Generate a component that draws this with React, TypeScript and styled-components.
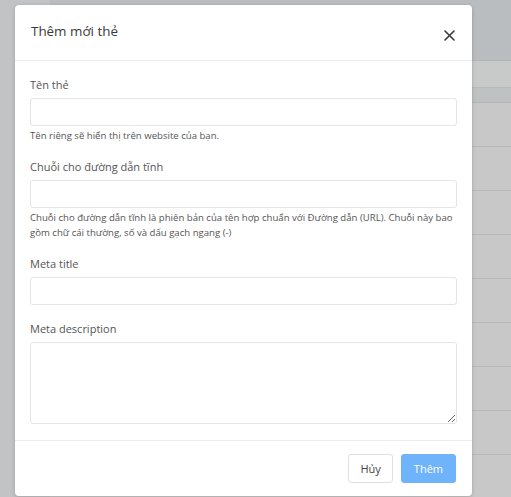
import React from 'react';
import styled, { createGlobalStyle } from 'styled-components';

const GlobalStyle = createGlobalStyle`
  html, body {
    margin: 0;
    padding: 0;
    width: 511px;
    height: 497px;
    overflow: hidden;
    background: #c1c3c4;
    font-family: 'Open Sans', 'Liberation Sans', Arial, sans-serif;
  }
  * { box-sizing: border-box; }
`;

const fields = [
  { label: 'Tên thẻ', help: 'Tên riêng sẽ hiển thị trên website của bạn.' },
  {
    label: 'Chuỗi cho đường dẫn tĩnh',
    help: 'Chuỗi cho đường dẫn tĩnh là phiên bản của tên hợp chuẩn với Đường dẫn (URL). Chuỗi này bao gồm chữ cái thường, số và dấu gạch ngang (-)'
  },
  { label: 'Meta title' }
];

const App = () => {
  return (
    <Screen>
      <GlobalStyle />
      <Backdrop>
        <Sidebar />
        <Main>
          <TopBar />
          <TableHead />
          <TableHeadStrip />
          {Array.from({ length: 9 }).map((_, i) => (
            <TableRow key={i} />
          ))}
        </Main>
      </Backdrop>

      <Modal>
        <ModalHeader>
          <ModalTitle>Thêm mới thẻ</ModalTitle>
          <CloseButton aria-label="close">
            <svg width="11" height="11" viewBox="0 0 11 11">
              <path d="M1 1L10 10M10 1L1 10" stroke="#3a3a3a" strokeWidth="1.6" strokeLinecap="round" />
            </svg>
          </CloseButton>
        </ModalHeader>

        <ModalBody>
          {fields.map((f) => (
            <Field key={f.label}>
              <Label>{f.label}</Label>
              <Input type="text" />
              {f.help && <Help>{f.help}</Help>}
            </Field>
          ))}
          <Field>
            <Label>Meta description</Label>
            <TextArea />
          </Field>
        </ModalBody>

        <ModalFooter>
          <Button>Hủy</Button>
          <Button $primary>Thêm</Button>
        </ModalFooter>
      </Modal>
    </Screen>
  );
};

export default App;

const Screen = styled.div`
  position: relative;
  width: 511px;
  height: 497px;
  overflow: hidden;
`;

const Backdrop = styled.div`
  display: grid;
  grid-template-columns: 50px 1fr;
  height: 100%;
`;

const Sidebar = styled.div`
  background: #c1c3c4;
`;

const Main = styled.div`
  display: flex;
  flex-direction: column;
  background: #c8c8c8;
`;

const TopBar = styled.div`
  height: 61px;
  background: #b9bdbf;
  border-bottom: 1px solid #b3b6b8;
`;

const TableHead = styled.div`
  height: 27px;
  background: #c8c9c9;
  border-bottom: 1px solid #b6b8b9;
`;

const TableHeadStrip = styled.div`
  height: 15px;
  background: #bfc2c3;
  border-bottom: 1px solid #b4b6b7;
`;

const TableRow = styled.div`
  height: 44px;
  flex-shrink: 0;
  border-bottom: 1px solid #b7b7b7;
`;

const Modal = styled.div`
  position: absolute;
  left: 15px;
  top: 5px;
  width: 457px;
  height: 491px;
  background: #fff;
  border-radius: 4px;
  box-shadow: 0 1px 4px rgba(0, 0, 0, 0.18);
  display: flex;
  flex-direction: column;
`;

const ModalHeader = styled.div`
  height: 56px;
  display: flex;
  align-items: center;
  justify-content: space-between;
  padding: 0 17px 0 16px;
  border-bottom: 1px solid #ececec;
`;

const ModalTitle = styled.h4`
  margin: 0 0 3px;
  font-size: 13.4px;
  font-weight: 400;
  color: #3a3a3a;
`;

const CloseButton = styled.button`
  border: none;
  background: none;
  padding: 0;
  margin-top: 5px;
  display: flex;
  cursor: pointer;
`;

const ModalBody = styled.div`
  flex: 1;
  padding: 16px 15px 16px;
  display: flex;
  flex-direction: column;
  gap: 16px;
  border-bottom: 1px solid #ececec;
`;

const Field = styled.div`
  display: flex;
  flex-direction: column;
`;

const Label = styled.label`
  font-size: 11px;
  line-height: 16px;
  color: #555;
  margin-bottom: 5px;
`;

const Input = styled.input`
  height: 28px;
  width: 100%;
  border: 1px solid #e4e4e4;
  border-radius: 3px;
  outline: none;
  font: inherit;
`;

const TextArea = styled.textarea`
  height: 82px;
  width: 100%;
  border: 1px solid #e4e4e4;
  border-radius: 3px;
  outline: none;
  font: inherit;
  resize: vertical;
`;

const Help = styled.div`
  margin-top: 2px;
  font-size: 9.6px;
  line-height: 15px;
  color: #555;
`;

const ModalFooter = styled.div`
  height: 55px;
  display: flex;
  align-items: center;
  justify-content: flex-end;
  gap: 8px;
  padding: 0 16px;
`;

const Button = styled.button<{ $primary?: boolean }>`
  height: 29px;
  padding: 0 ${(p) => (p.$primary ? '12px' : '11px')};
  border-radius: 3px;
  font-family: inherit;
  font-size: 11px;
  border: 1px solid ${(p) => (p.$primary ? '#6fb3fb' : '#e0e0e0')};
  background: ${(p) => (p.$primary ? '#6fb3fb' : '#fff')};
  color: ${(p) => (p.$primary ? '#fff' : '#444')};
`;
